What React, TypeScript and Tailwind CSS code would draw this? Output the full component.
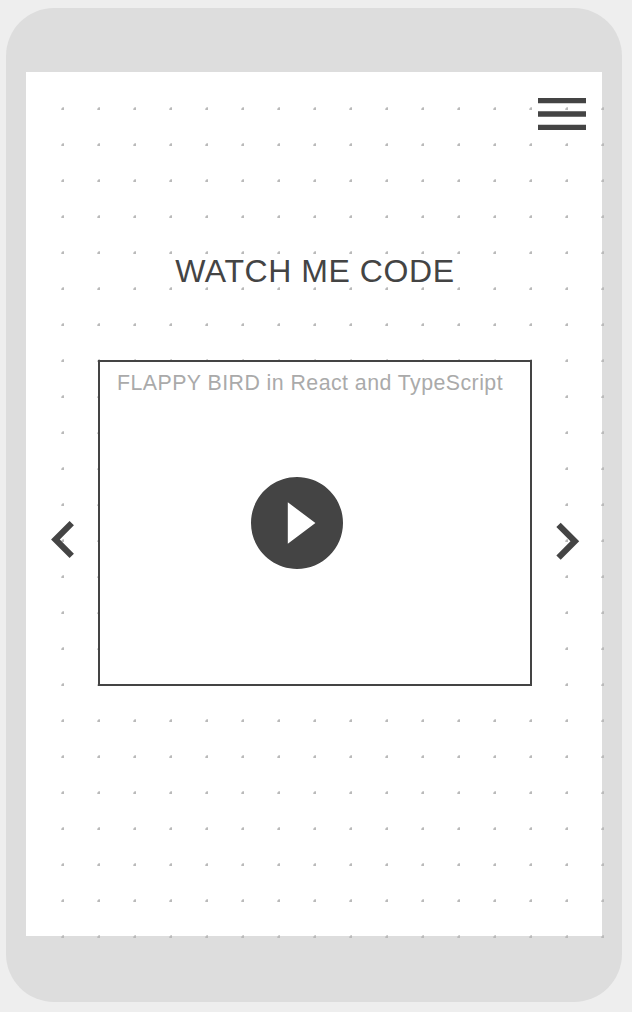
import React from "react";

function DotGrid() {
  return (
    <svg className="pointer-events-none absolute left-[35px] top-[35px]" width="543" height="831" shapeRendering="crispEdges" aria-hidden="true">
      <defs>
        <pattern id="dots" width="36" height="36" patternUnits="userSpaceOnUse">
          <rect x="1" y="1" width="2" height="2" fill="#bababa" />
          <rect x="1" y="0" width="1" height="1" fill="#bababa" fillOpacity="0.5" />
          <rect x="2" y="0" width="1" height="1" fill="#bababa" fillOpacity="0.75" />
          <rect x="0" y="1" width="1" height="1" fill="#bababa" fillOpacity="0.45" />
          <rect x="0" y="2" width="1" height="1" fill="#bababa" fillOpacity="0.7" />
        </pattern>
      </defs>
      <rect width="543" height="831" fill="url(#dots)" />
    </svg>
  );
}

function MenuIcon() {
  return (
    <svg width="48" height="32" viewBox="3 6 18 12" fill="#444444">
      <path d="M3 18h18v-2H3v2zm0-5h18v-2H3v2zm0-7v2h18V6H3z" />
    </svg>
  );
}

function PreviousIcon() {
  return (
    <svg width="23" height="37" viewBox="8 6 7.41 12" fill="#444444">
      <path d="M15.41 7.41L14 6l-6 6 6 6 1.41-1.41L10.83 12z" />
    </svg>
  );
}

function NextIcon() {
  return (
    <svg className="overflow-visible" width="23" height="37" viewBox="8.5 6.08 7.41 12" fill="#444444">
      <path d="M10 6L8.59 7.41 13.17 12l-4.58 4.59L10 18l6-6z" />
    </svg>
  );
}

function PlayIcon() {
  return (
    <svg width="92" height="92" viewBox="2 2 20 20" fill="#444444">
      <path d="M12 2C6.48 2 2 6.48 2 12s4.48 10 10 10 10-4.48 10-10S17.52 2 12 2zm-2 14.5v-9l6 4.5-6 4.5z" />
    </svg>
  );
}

export default function App() {
  return (
    <div className="h-[1012px] w-[632px] bg-[#eeeeee] pl-[6px] pt-2 font-['Liberation_Sans',Arial,sans-serif]">
      <div className="h-[994px] w-[616px] rounded-[48px] bg-[#dddddd] pl-5 pt-16">
        <main className="relative flex h-[864px] w-[576px] flex-col bg-white">
          <DotGrid />
          <header className="relative flex justify-end pr-4 pt-[26px]">
            <button aria-label="Menu"><MenuIcon /></button>
          </header>
          <h1 className="relative mt-[121px] whitespace-nowrap pl-[149.3px] text-[32px] leading-10 tracking-[0.56px] text-[#444444]">
            WATCH ME CODE
          </h1>
          <section className="relative mt-[69px] flex items-start pl-[25px]">
            <button aria-label="Previous" className="mt-[161px]"><PreviousIcon /></button>
            <article className="ml-6 flex h-[326px] w-[434px] flex-col border-2 border-[#444444] bg-white">
              <h2 className="mt-[9px] whitespace-nowrap pl-[17px] text-[21.33px] leading-6 tracking-[0.45px] text-[#aaaaaa]">
                FLAPPY BIRD in React and TypeScript
              </h2>
              <button aria-label="Play" className="ml-[151px] mt-[82px] self-start"><PlayIcon /></button>
            </article>
            <button aria-label="Next" className="ml-6 mt-[163px]"><NextIcon /></button>
          </section>
        </main>
      </div>
    </div>
  );
}
